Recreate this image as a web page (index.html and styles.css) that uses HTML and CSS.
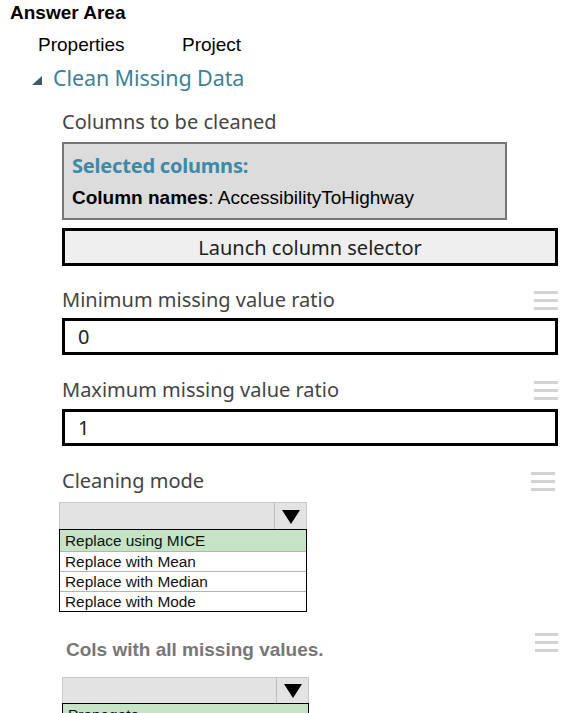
FILE: index.html
```html
<!DOCTYPE html>
<html>
<head>
<meta charset="utf-8">
<link rel="stylesheet" href="styles.css">
</head>
<body>
<div class="page">
  <div class="title">Answer Area</div>
  <div class="tabs">
    <span class="tab tab-props">Properties</span>
    <span class="tab">Project</span>
  </div>
  <div class="module">
    <span class="tri"></span>
    <span class="module-name">Clean Missing Data</span>
  </div>
  <div class="panel">
    <div class="label">Columns to be cleaned</div>
    <div class="selbox">
      <div class="sel-title">Selected columns:</div>
      <div class="sel-names"><b>Column names</b>: AccessibilityToHighway</div>
    </div>
    <div class="launch">Launch column selector</div>

    <div class="field-head head-min">
      <span class="label">Minimum missing value ratio</span>
      <span class="ham"><i></i><i></i><i></i></span>
    </div>
    <div class="input input-min">0</div>

    <div class="field-head head-max">
      <span class="label">Maximum missing value ratio</span>
      <span class="ham"><i></i><i></i><i></i></span>
    </div>
    <div class="input input-max">1</div>

    <div class="field-head head-mode">
      <span class="label">Cleaning mode</span>
      <span class="ham"><i></i><i></i><i></i></span>
    </div>
    <div class="dropdown dd1">
      <div class="dd-field"><span class="dd-btn"><span class="arrow"></span></span></div>
      <div class="dd-list">
        <div class="dd-item sel">Replace using MICE</div>
        <div class="dd-item">Replace with Mean</div>
        <div class="dd-item">Replace with Median</div>
        <div class="dd-item">Replace with Mode</div>
      </div>
    </div>

    <div class="field-head head-cols">
      <span class="bold-label">Cols with all missing values.</span>
      <span class="ham"><i></i><i></i><i></i></span>
    </div>
    <div class="dropdown dd2">
      <div class="dd-field"><span class="dd-btn"><span class="arrow"></span></span></div>
      <div class="dd-list">
        <div class="dd-item sel">Propagate</div>
      </div>
    </div>
  </div>
</div>
</body>
</html>
```

FILE: styles.css
```css
html, body {
  margin: 0;
  padding: 0;
  background: #fff;
}
.page {
  width: 573px;
  height: 713px;
  overflow: hidden;
  font-family: "Liberation Sans", Arial, sans-serif;
  color: #000;
}
.title {
  font-weight: bold;
  font-size: 19px;
  line-height: 22px;
  height: 22px;
  padding: 2px 0 0 10px;
}
.tabs {
  display: flex;
  margin-top: 10px;
  padding-left: 38px;
  font-size: 19px;
  line-height: 22px;
  height: 22px;
}
.tab-props {
  width: 144px;
}
.module {
  display: flex;
  align-items: flex-start;
  margin-top: 8px;
  padding-left: 32px;
  height: 28px;
}
.tri {
  width: 0;
  height: 0;
  border-left: 10px solid transparent;
  border-bottom: 9px solid #3d5a66;
  margin: 12px 11px 0 0;
}
.module-name {
  font-family: "Noto Sans", "Open Sans", sans-serif;
  font-size: 21.5px;
  line-height: 28px;
  color: #3f7f93;
  letter-spacing: -0.1px;
  white-space: nowrap;
}
.panel {
  padding: 18px 15px 0 62px;
}
.label {
  font-family: "Noto Sans", "Open Sans", sans-serif;
  font-size: 20px;
  color: #444;
  line-height: 24px;
  height: 24px;
  white-space: nowrap;
}
.selbox {
  margin-top: 8px;
  width: 445px;
  height: 78px;
  box-sizing: border-box;
  border: 2px solid #777;
  background: #dcdcdc;
  padding: 10px 0 0 8px;
}
.sel-title {
  font-family: "Noto Sans", "Open Sans", sans-serif;
  font-weight: bold;
  font-size: 20px;
  color: #3d8aa8;
  line-height: 24px;
  letter-spacing: -0.2px;
}
.sel-names {
  font-size: 19px;
  line-height: 22px;
  margin-top: 9px;
  white-space: nowrap;
}
.launch {
  margin-top: 8px;
  height: 38px;
  box-sizing: border-box;
  border: 3px solid #000;
  background: #efefef;
  text-align: center;
  font-family: "Noto Sans", "Open Sans", sans-serif;
  font-size: 20px;
  padding-top: 1px;
  line-height: 31px;
  color: #222;
}
.field-head {
  display: flex;
  justify-content: space-between;
  align-items: flex-start;
  height: 24px;
}
.head-min { margin-top: 22px; }
.head-max { margin-top: 23px; }
.head-mode { margin-top: 23px; }
.ham {
  display: flex;
  flex-direction: column;
  gap: 5px;
  width: 24px;
  margin-top: 3px;
}
.ham i {
  display: block;
  height: 3px;
  background: #d3d3d3;
}
.head-mode .ham {
  margin-right: 3px;
}
.input {
  height: 37px;
  box-sizing: border-box;
  border: 3px solid #000;
  padding-left: 13px;
  font-family: "Noto Sans", "Open Sans", sans-serif;
  font-size: 20px;
  line-height: 31px;
  color: #222;
}
.input-min { margin-top: 6px; }
.input-max { margin-top: 7px; }
.dropdown {
  width: 248px;
}
.dd1 {
  margin-top: 9px;
  margin-left: -3px;
}
.dd-field {
  height: 27px;
  box-sizing: border-box;
  border: 1px solid #c8c8c8;
  border-bottom: none;
  background: #e3e3e3;
  display: flex;
  justify-content: flex-end;
}
.dd-btn {
  width: 31px;
  border-left: 1px solid #bdbdbd;
  display: flex;
  justify-content: center;
  align-items: flex-start;
}
.arrow {
  width: 0;
  height: 0;
  border-left: 9.5px solid transparent;
  border-right: 9.5px solid transparent;
  border-top: 14px solid #000;
  margin-top: 7px;
}
.dd-list {
  border: 1px solid #000;
  background: #fff;
}
.dd-item {
  height: 19px;
  line-height: 19px;
  font-size: 15.4px;
  padding-left: 5px;
  border-top: 1px solid #b4b4b4;
  color: #111;
  white-space: nowrap;
}
.dd-item:first-child {
  border-top: none;
  height: 21px;
  line-height: 22px;
}
.dd-item.sel {
  background: #c5e3c5;
}
.head-cols {
  margin-top: 26px;
  padding-left: 4px;
}
.bold-label {
  font-weight: bold;
  font-size: 19px;
  line-height: 24px;
  color: #777;
  white-space: nowrap;
}
.head-cols .ham {
  margin-top: -5px;
  width: 23px;
}
.dd2 {
  margin-top: 15px;
  width: 247px;
}
.dd2 .dd-field {
  height: 26px;
}
.dd2 .arrow {
  margin-top: 6px;
}
```
